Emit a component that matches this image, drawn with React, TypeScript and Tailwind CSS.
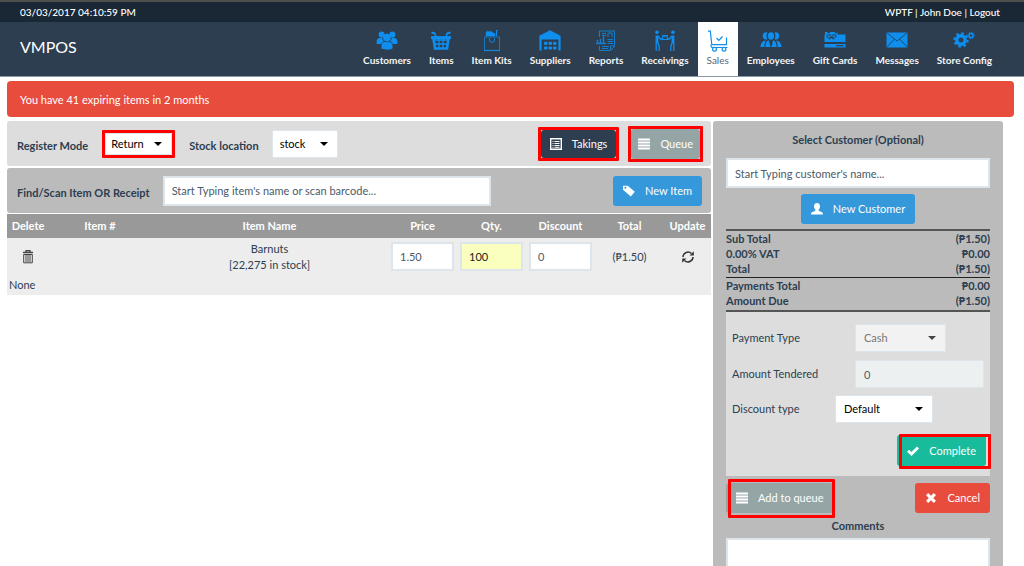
import { type FC, type ReactNode } from "react";

interface IconProps {
  className?: string;
}

interface NavItem {
  label: string;
  icon: ReactNode;
  active?: boolean;
}

// ---------- Module icons ----------

const CustomersIcon = () => (
  <svg viewBox="0 0 22 22" className="h-[22px] w-[22px]" fill="currentColor">
    <circle cx="5.600" cy="4.400" r="3" />
    <circle cx="16.400" cy="4.400" r="3" />
    <path d="M.6 14v-2.600C.6 9 2.400 7.800 4.600 7.800h1.600c.2 1.700.8 2.700 1.800 3.500-1.400.6-2.300 1.500-2.700 2.700z" />
    <path d="M21.400 14v-2.600c0-2.400-1.800-3.600-4-3.600h-1.600c-.2 1.700-.8 2.700-1.800 3.500 1.400.6 2.300 1.500 2.700 2.700z" />
    <circle cx="11" cy="7.600" r="3.900" />
    <path d="M5.500 18.500v-2.500c0-2.800 2-4.200 3.900-4.200.9.6 2.300.6 3.200 0 1.900 0 3.900 1.400 3.900 4.200v2.500c-2.700 1.600-8.300 1.600-11 0z" />
  </svg>
);

const ItemsIcon = () => (
  <svg viewBox="0 0 22 22" className="h-[22px] w-[22px]" fill="none" stroke="currentColor">
    <path d="M1.500 2.500 5 3.500M20.500 2.500 17 3.500" strokeWidth="2" />
    <path d="m5 3 1 5M17 3l-1 5" strokeWidth="1.500" />
    <path d="M1 7.600h20" strokeWidth="3" />
    <path d="m3.500 8.500 1.500 10h12l1.500-10" strokeWidth="2.600" />
    <path d="M4 10h14M4.500 14h13M9 9v9M13 9v9" strokeWidth="1.300" />
  </svg>
);

const ItemKitsIcon = () => (
  <svg viewBox="0 0 22 22" className="h-[22px] w-[22px]" fill="none" stroke="currentColor">
    <path d="M4 7h14.500v13.500M3.500 7v13.500" strokeWidth="1" opacity=".75" />
    <path d="M3 20.500h16" strokeWidth="1.200" opacity=".9" />
    <path d="M5 6V3c0-2 2.500-2.500 3.500-1 1.500-1.500 3-.5 3 1l2.500.5V6z" fill="currentColor" strokeWidth=".5" />
    <path d="M15.500 6V.5h1.500" />
    <path d="M8.500 8.500v1.500c0 3 5 3 5 0V8.500" />
  </svg>
);

const SuppliersIcon = () => (
  <svg viewBox="0 0 22 22" className="h-[22px] w-[22px]" fill="none" stroke="currentColor">
    <path d="M1.500 20.500V6.500L11 1.500l9.500 5v14" strokeWidth="2.200" />
    <path d="m2 6.500 9-5 9 5v2.500H2z" fill="currentColor" strokeWidth="1" />
    <path
      d="M5.500 12.300H8v2H5.500zM10 12.300h2.500v2H10zM14.500 12.300H17v2h-2.500zM5.500 17H8v2H5.500zM10 17h2.500v2H10zM14.500 17H17v2h-2.500z"
      fill="currentColor"
      strokeWidth="1"
    />
  </svg>
);

const ReportsIcon = () => (
  <svg viewBox="0 0 22 22" className="h-[22px] w-[22px]" fill="none" stroke="currentColor">
    <g opacity=".8">
      <path d="M4.500 7V1h15v15.500l-4 4h-11V16" />
      <path d="M7 3.500h4M7 5.500h4M13 7V3h4v4M12.500 9.500H18M12.500 11.500H18M12.500 13.500H18M7 16.500h7M7 18.500h6M15.500 20v-4h4" />
      <path d="M1 13.500h10M2.500 13v-3M5.500 13V9M8.500 13V6.500" strokeWidth="1.500" />
    </g>
  </svg>
);

const ReceivingsIcon = () => (
  <svg viewBox="0 0 22 22" className="h-[22px] w-[22px]" fill="none" stroke="currentColor">
    <circle cx="3" cy="2.300" r="1.800" fill="currentColor" stroke="none" />
    <circle cx="19" cy="2.300" r="1.800" fill="currentColor" stroke="none" />
    <path d="M3 5.500v8M19 5.500v8" strokeWidth="2.800" />
    <path d="M2.200 13v8M4.200 13l1 4v4M19.800 13v8M17.800 13l-1 4v4" strokeWidth="1.300" />
    <path d="m4 6 2.500 3H9M18 6l-2.500 3H13" strokeWidth="1.400" />
    <path d="M8.700 5.700h4.600v3.800H8.700zM11 5.700v1.500" strokeWidth="1.200" />
  </svg>
);

const SalesIcon = () => (
  <svg viewBox="0 0 22 22" className="h-[22px] w-[22px]" fill="none" stroke="currentColor" strokeWidth="1.200">
    <path d="M1 1.200h2.300l1.500 13.500h14.700V7.500" />
    <path d="M4.500 14.700c-1 1.500-.5 2.800 1 2.800h15" />
    <path d="m9.500 8 2.300 2.300L15.500 6.500" />
    <circle cx="7.500" cy="19.200" r="1.900" fill="white" />
    <circle cx="17" cy="19.200" r="1.900" fill="white" />
  </svg>
);

const EmployeesIcon = () => (
  <svg viewBox="0 0 22 22" className="h-[22px] w-[22px]" fill="currentColor">
    <ellipse cx="11" cy="6" rx="3.100" ry="3.700" />
    <path d="M7.500 2.600C5.200 1.800 2.700 3 2.700 5.800s2.200 4.600 4.700 3.400C6.200 7.100 6.200 4.700 7.500 2.600zM14.500 2.600C16.800 1.800 19.300 3 19.300 5.800s-2.200 4.600-4.700 3.400c1.200-2.100 1.200-4.500-.1-6.600z" />
    <path d="M8.800 10.300 10.600 17H5.400c0-3.800 1-5.900 3.400-6.700zM13.200 10.300 11.400 17h5.200c0-3.800-1-5.900-3.400-6.700z" />
    <path d="M6 10.500C3 10.800.7 12.700.4 17h4c0-2.900.4-4.800 1.600-6.500zM16 10.500c3 .3 5.300 2.200 5.600 6.500h-4c0-2.900-.4-4.800-1.600-6.500z" />
  </svg>
);

const GiftCardsIcon = () => (
  <svg viewBox="0 0 22 22" className="h-[22px] w-[22px]" fill="none" stroke="currentColor">
    <path d="M.5 4.500h21v7.500H.5zM.5 14h21v3.500H.5z" fill="currentColor" stroke="none" />
    <path d="M1 4.500V2h2l1.500 1.500L6.500 2h4L12 3.500 13.500 2v2.500z" fill="currentColor" stroke="none" />
    <path d="M3 6.500c.5-2.500 3.500-2 4.500 1C8.500 4.500 11.500 4 12 6.500c0 1.500-2.500 1.500-4.500 1C5.500 8 3 8 3 6.500M7.300 7.500l-2.500 2.300M7.700 7.500l2.500 2.300" stroke="#2d3e50" strokeWidth="1" />
    <path d="M12 15.700h7.500" stroke="#2d3e50" strokeWidth="1.200" />
  </svg>
);

const MessagesIcon = () => (
  <svg viewBox="0 0 22 22" className="h-[22px] w-[22px]">
    <path d="M.5 2.500h21v15H.5z" fill="currentColor" />
    <path d="m1 3 10 8 10-8M1 17l7.500-8M21 17l-7.500-8" fill="none" stroke="#2d3e50" strokeWidth=".9" />
  </svg>
);

const ConfigIcon = () => (
  <svg viewBox="0 0 22 22" className="h-[22px] w-[22px]" fill="none" stroke="currentColor">
    <circle cx="8" cy="10" r="4.200" strokeWidth="3.400" />
    <circle cx="8" cy="10" r="6.600" strokeWidth="2.200" strokeDasharray="2.592 2.592" />
    <circle cx="18" cy="5.500" r="2" strokeWidth="1.500" />
    <circle cx="18" cy="5.500" r="3.200" strokeWidth="1" strokeDasharray="1.257 1.257" />
  </svg>
);

// ---------- Small button icons ----------

const ListAltIcon = () => (
  <svg viewBox="0 0 12 12" className="h-3 w-3" fill="none" stroke="currentColor">
    <path d="M.7.700h10.600v10.600H.7z" strokeWidth="1.400" />
    <path d="M2.500 3.500h1M2.500 5.500h1M2.500 7.500h1M2.500 9.300h1M4.500 3.500h5M4.500 5.500h5M4.500 7.500h5M4.500 9.300h5" />
  </svg>
);

const JustifyIcon = () => (
  <svg viewBox="0 0 12 12" className="h-3 w-3" fill="currentColor">
    <path d="M0 .5h12v2H0zM0 3.500h12v2H0zM0 6.500h12v2H0zM0 9.500h12v2H0z" />
  </svg>
);

const TagIcon = () => (
  <svg viewBox="0 0 12 12" className="h-3 w-3" fill="currentColor">
    <path fillRule="evenodd" d="M0 .8h4.800l7 6-4 4.700L0 4.800zM2.300 1.800a1 1 0 1 0 0 2 1 1 0 0 0 0-2z" />
  </svg>
);

const UserIcon = () => (
  <svg viewBox="0 0 12 12" className="h-3 w-3" fill="currentColor">
    <path d="M6 0c2 0 3 1.400 3 3.200 0 1.500-.6 2.700-1.300 3.400v1.100l3.300 1.500c.7.400 1 1.200 1 2.300H0c0-1.100.3-1.900 1-2.300l3.300-1.500V6.600C3.600 5.900 3 4.700 3 3.200 3 1.400 4 0 6 0z" />
  </svg>
);

const CheckIcon = () => (
  <svg viewBox="0 0 12 12" className="h-3 w-3" fill="currentColor">
    <path d="m0 6.800 2-2 2.400 2.300L10 1.500l2 2-7.500 7.600z" />
  </svg>
);

const CrossIcon = () => (
  <svg viewBox="0 0 12 12" className="h-3 w-3" fill="currentColor">
    <path d="m3.200 1 2.800 2.800L8.800 1 11 3.200 8.200 6 11 8.800 8.800 11 6 8.200 3.200 11 1 8.800 3.800 6 1 3.200z" />
  </svg>
);

const TrashIcon = () => (
  <svg viewBox="0 0 12 14" className="h-[14px] w-3" fill="none" stroke="currentColor">
    <path d="M1 2.500h10M4 2V.7h4V2" strokeWidth="1.300" />
    <path d="M1.700 4.500h8.600v8.300H1.700zM4 5v7M6 5v7M8 5v7" />
  </svg>
);

const RefreshIcon = () => (
  <svg viewBox="0 0 12 12" className="h-3 w-3" fill="none" stroke="currentColor" strokeWidth="1.500">
    <path d="M1 6a5 5 0 0 1 8.500-3.500M11 6a5 5 0 0 1-8.500 3.500" />
    <path d="M11.800.300v4.200H7.600zM.2 11.700V7.500h4.200z" fill="currentColor" stroke="none" />
  </svg>
);

const Caret: FC<IconProps> = ({ className = "" }) => (
  <svg viewBox="0 0 8 4" className={`pointer-events-none h-1 w-2 ${className}`} fill="currentColor">
    <path d="M0 0h8L4 4z" />
  </svg>
);

// ---------- Building blocks ----------

// Red frame laid over a control that needs attention
const Mark: FC<{ className: string }> = ({ className }) => (
  <span className={`pointer-events-none absolute rounded-[1px] border-[3px] border-[#fe0000] ${className}`} />
);

interface ActionButtonProps {
  icon: ReactNode;
  label: string;
  className: string;
}

const ActionButton: FC<ActionButtonProps> = ({ icon, label, className }) => (
  <button type="button" className={`flex items-center gap-[10px] rounded-[3px] text-white ${className}`}>
    {icon}
    <span>{label}</span>
  </button>
);

interface PickerProps {
  id: string;
  value: string;
  className: string;
  disabled?: boolean;
}

const Picker: FC<PickerProps> = ({ id, value, className, disabled }) => (
  <div className={`relative ${disabled ? "text-[#777]" : "text-black"}`}>
    <select
      id={id}
      disabled={disabled}
      className={`block appearance-none border border-[#dce4ec] ${disabled ? "bg-[#f2f2f2]" : "bg-white"} ${className}`}
    >
      <option>{value}</option>
    </select>
    <span className="pointer-events-none absolute inset-y-0 right-[10px] flex items-center">
      <Caret className={disabled ? "text-[#444]" : ""} />
    </span>
  </div>
);

const navItems: NavItem[] = [
  { label: "Customers", icon: <CustomersIcon /> },
  { label: "Items", icon: <ItemsIcon /> },
  { label: "Item Kits", icon: <ItemKitsIcon /> },
  { label: "Suppliers", icon: <SuppliersIcon /> },
  { label: "Reports", icon: <ReportsIcon /> },
  { label: "Receivings", icon: <ReceivingsIcon /> },
  { label: "Sales", icon: <SalesIcon />, active: true },
  { label: "Employees", icon: <EmployeesIcon /> },
  { label: "Gift Cards", icon: <GiftCardsIcon /> },
  { label: "Messages", icon: <MessagesIcon /> },
  { label: "Store Config", icon: <ConfigIcon /> },
];

const Header = () => (
  <header>
    <div className="flex h-[22px] items-center justify-between border-t-2 border-[#4f4f4c] bg-[#1a2735] pl-5 pr-6 text-[10px] font-medium text-white">
      <span>03/03/2017 04:10:59 PM</span>
      <span>
        WPTF | John Doe | <a href="#logout">Logout</a>
      </span>
    </div>
    <div className="flex h-[55px] items-stretch justify-between border-b border-[#8b96a2] bg-[#2d3e50] pl-5 pr-[23px]">
      <a href="#home" className="pt-[13px] text-base text-white">VMPOS</a>
      <nav className="flex">
        {navItems.map((item) => (
          <a
            key={item.label}
            href={`#${item.label.toLowerCase().replace(" ", "-")}`}
            className={`flex flex-col items-center whitespace-nowrap px-[9px] pt-2 text-[10px] leading-4 ${
              item.active ? "bg-white text-[#596673]" : "font-bold text-[#f4f6f7]"
            }`}
          >
            <span className="text-[#0e8eee]">{item.icon}</span>
            {item.label}
          </a>
        ))}
      </nav>
    </div>
  </header>
);

const fieldClass = "border-2 border-[#dce4ec] px-[7px] text-[#4a5a69] placeholder:text-[#4a5a69]";

const Register = () => (
  <section className="min-w-0 flex-1">
    <div className="flex h-[45px] items-center rounded-[3px] bg-[#ddd] pl-[10px] pr-[11px]">
      <label htmlFor="mode" className="pt-1 font-bold">Register Mode</label>
      <div className="relative ml-[17px]">
        <Picker id="mode" value="Return" className="h-[22px] w-[67px] pl-[5px]" />
        <Mark className="-inset-[3px]" />
      </div>
      <label htmlFor="stock" className="ml-[17px] pt-1 font-bold">Stock location</label>
      <div className="ml-[13px]">
        <Picker id="stock" value="stock" className="h-7 w-[66px] pl-[7px]" />
      </div>
      <div className="relative ml-auto">
        <ActionButton icon={<ListAltIcon />} label="Takings" className="h-7 bg-[#2c3e50] px-[9px]" />
        <Mark className="-inset-[3px]" />
      </div>
      <div className="relative ml-[15px]">
        <ActionButton icon={<JustifyIcon />} label="Queue" className="h-[30px] bg-[#95a5a6] px-[7px]" />
        <Mark className="-inset-[3px]" />
      </div>
    </div>

    <div className="mt-0.5 flex h-[45px] items-center rounded-[3px] bg-[#bbb] pl-[10px] pr-[9px]">
      <label htmlFor="item" className="pt-1 font-bold">Find/Scan Item OR Receipt</label>
      <input
        id="item"
        type="text"
        placeholder="Start Typing item's name or scan barcode..."
        className={`ml-[13px] h-[30px] w-[328px] bg-white ${fieldClass}`}
      />
      <ActionButton icon={<TagIcon />} label="New Item" className="ml-auto h-[30px] bg-[#3498db] px-[10px]" />
    </div>

    <table className="mt-px w-full table-fixed bg-[#ededed] text-center">
      <colgroup>
        <col className="w-[42px]" />
        <col className="w-[102px]" />
        <col />
        <col className="w-[69px]" />
        <col className="w-[69px]" />
        <col className="w-[69px]" />
        <col className="w-[69px]" />
        <col className="w-[47px]" />
      </colgroup>
      <thead className="bg-[#999] text-white">
        <tr className="h-6">
          <th>Delete</th>
          <th>Item #</th>
          <th>Item Name</th>
          <th>Price</th>
          <th>Qty.</th>
          <th>Discount</th>
          <th>Total</th>
          <th>Update</th>
        </tr>
      </thead>
      <tbody>
        <tr className="h-[37px]">
          <td>
            <button type="button" aria-label="Delete item" className="mx-auto block text-[#444]"><TrashIcon /></button>
          </td>
          <td />
          <td>
            Barnuts
            <br />
            [22,275 in stock]
          </td>
          <td>
            <input aria-label="Price" defaultValue="1.50" className={`h-[29px] w-[63px] bg-white ${fieldClass}`} />
          </td>
          <td>
            <input
              aria-label="Quantity"
              defaultValue="100"
              className="h-[29px] w-[63px] border-2 border-[#dce4ec] bg-[#faffbd] px-[7px] text-[#222]"
            />
          </td>
          <td>
            <input aria-label="Discount" defaultValue="0" className={`h-[29px] w-[63px] bg-white ${fieldClass}`} />
          </td>
          <td>(₱1.50)</td>
          <td>
            <button type="button" aria-label="Update item" className="mx-auto block text-[#333]"><RefreshIcon /></button>
          </td>
        </tr>
        <tr className="h-5">
          <td colSpan={8} className="pl-0.5 text-left">None</td>
        </tr>
      </tbody>
    </table>
  </section>
);

const Row: FC<{ label: string; value: string }> = ({ label, value }) => (
  <div className="flex justify-between leading-[15px]">
    <dt>{label}</dt>
    <dd>{value}</dd>
  </div>
);

const Summary = () => (
  <aside className="w-[290px] shrink-0 rounded-[3px] bg-[#bbb] px-[13px] pt-[11px]">
    <label htmlFor="customer" className="block text-center font-bold">Select Customer (Optional)</label>
    <input
      id="customer"
      type="text"
      placeholder="Start Typing customer's name..."
      className={`mt-[10px] block h-[30px] w-full bg-white ${fieldClass}`}
    />
    <div className="mt-[6px] flex justify-center">
      <ActionButton icon={<UserIcon />} label="New Customer" className="h-[30px] bg-[#3498db] px-[10px]" />
    </div>

    <dl className="mt-[5px] border-t-2 border-[#555] pb-px font-bold">
      <Row label="Sub Total" value="(₱1.50)" />
      <Row label="0.00% VAT" value="₱0.00" />
      <Row label="Total" value="(₱1.50)" />
    </dl>
    <dl className="border-b-2 border-t border-b-[#555] border-t-[#222] pb-0.5 font-bold">
      <Row label="Payments Total" value="₱0.00" />
      <Row label="Amount Due" value="(₱1.50)" />
    </dl>

    <div className="bg-[#ddd] pb-[10px] pl-[6px] pr-1 pt-3">
      <div className="flex items-center justify-between pr-10">
        <label htmlFor="payment">Payment Type</label>
        <Picker id="payment" value="Cash" disabled className="h-7 w-[91px] pl-2" />
      </div>
      <div className="mt-2 flex items-center justify-between pr-0.5">
        <label htmlFor="tendered">Amount Tendered</label>
        <input
          id="tendered"
          defaultValue="0"
          readOnly
          className="h-7 w-[129px] border border-[#dce4ec] bg-[#ecf0f1] px-2 text-[#4a5a69]"
        />
      </div>
      <div className="mt-[7px] flex items-center justify-between pr-[53px]">
        <label htmlFor="discount">Discount type</label>
        <Picker id="discount" value="Default" className="h-7 w-[98px] pl-2" />
      </div>
      <div className="mt-3 flex justify-end">
        <div className="relative">
          <ActionButton icon={<CheckIcon />} label="Complete" className="h-[31px] bg-[#18bc9c] px-[10px]" />
          <Mark className="-bottom-[3px] -right-[5px] -top-px left-0.5" />
        </div>
      </div>
    </div>

    <div className="mt-[7px] flex justify-between">
      <div className="relative">
        <ActionButton icon={<JustifyIcon />} label="Add to queue" className="h-[30px] bg-[#95a5a6] px-[10px]" />
        <Mark className="-bottom-[5px] -right-0.5 -top-1 left-0.5" />
      </div>
      <ActionButton icon={<CrossIcon />} label="Cancel" className="h-[30px] bg-[#e74c3c] px-[10px]" />
    </div>

    <label htmlFor="comments" className="mt-[5px] block text-center font-bold">Comments</label>
    <textarea id="comments" className="mt-1 block h-[60px] w-full resize-none border-2 border-[#dce4ec] bg-white" />
  </aside>
);

export default function App() {
  return (
    <div className="h-screen overflow-hidden bg-white font-['Lato',sans-serif] text-[11px] leading-4 text-[#2c3e50]">
      <Header />
      <div role="alert" className="ml-[7px] mr-[10px] mt-1 rounded bg-[#e74c3c] px-[13px] pb-[9px] pt-[11px] text-white">
        You have 41 expiring items in 2 months
      </div>
      <main className="mt-1 flex items-start gap-0.5 pl-[7px] pr-[21px]">
        <Register />
        <Summary />
      </main>
    </div>
  );
}
